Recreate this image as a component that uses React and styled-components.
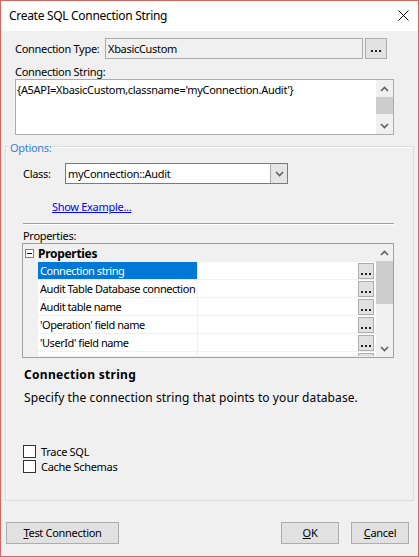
import styled, { createGlobalStyle } from "styled-components";

const GlobalStyle = createGlobalStyle`
  html, body { margin: 0; padding: 0; background: #f0f0f0; }
  body {
    font-family: "Segoe UI", "Noto Sans", sans-serif;
    font-size: 11px;
    letter-spacing: -0.3px;
    color: #000;
  }
  * { box-sizing: border-box; }
`;

const Window = styled.div`
  width: 419px;
  height: 557px;
  border: 1px solid #cf6763;
  display: flex;
  flex-direction: column;
  background: #f0f0f0;
  overflow: hidden;
`;

const TitleBar = styled.div`
  height: 30px;
  flex-shrink: 0;
  background: #fff;
  display: flex;
  align-items: center;
  justify-content: space-between;
  padding: 0 9px 1px 8px;
  font-size: 12px;
  line-height: 16px;
`;

const Body = styled.div`
  flex: 1;
  padding: 0 4px;
  display: flex;
  flex-direction: column;
`;

const Top = styled.div`
  padding: 7px 0 0 10px;
`;

const Row = styled.div`
  display: flex;
  align-items: flex-start;
  gap: ${(p) => p.gap || 0}px;
  margin-top: ${(p) => p.mt || 0}px;
`;

const Label = styled.div`
  width: ${(p) => p.w}px;
  padding-top: 3px;
  line-height: 15px;
  padding-left: ${(p) => p.pl || 0}px;
  white-space: nowrap;
`;

const Field = styled.div`
  width: ${(p) => p.w}px;
  height: 21px;
  border: 1px solid ${(p) => (p.white ? "#7a7a7a" : "#acacac")};
  background: ${(p) => (p.white ? "#fff" : "#f0f0f0")};
  padding: 2px 2px 0;
  line-height: 15px;
  display: flex;
  justify-content: space-between;
  align-items: flex-start;
`;

const SmallButton = styled.div`
  width: ${(p) => p.w}px;
  height: ${(p) => p.h}px;
  background: #e1e1e1;
  border: 1px solid #adadad;
  display: flex;
  align-items: center;
  justify-content: center;
  flex-shrink: 0;
`;

const Dots = styled.span`
  display: flex;
  gap: 2px;
  margin-top: ${(p) => p.mt || 4}px;
  span {
    width: 2px;
    height: 2px;
    background: #222;
  }
`;

const SectionLabel = styled.div`
  margin-top: 5px;
  line-height: 15px;
`;

const TextArea = styled.div`
  width: 379px;
  height: 56px;
  background: #fff;
  border: 1px solid #acacac;
  display: flex;
`;

const TextContent = styled.div`
  flex: 1;
  padding: 2px 1px;
  line-height: 15px;
`;

const ScrollBar = styled.div`
  width: 17px;
  background: #f0f0f0;
  display: flex;
  flex-direction: column;
  align-items: center;
`;

const ArrowBox = styled.div`
  height: 17px;
  width: 17px;
  display: flex;
  align-items: center;
  justify-content: center;
`;

const Thumb = styled.div`
  width: 17px;
  height: ${(p) => p.h}px;
  background: #cdcdcd;
`;

const Spacer = styled.div`
  flex: 1;
`;

const Group = styled.div`
  margin-top: 11px;
  height: 355px;
  flex-shrink: 0;
  border: 1px solid #dcdcdc;
  box-shadow: inset 1px 1px 0 #fff;
  padding: 0 19px 0 16px;
  display: flex;
  flex-direction: column;
`;

const Legend = styled.div`
  width: fit-content;
  margin: -7px 0 0 -13px;
  padding: 0 1px;
  background: #f0f0f0;
  color: #3a80dc;
  line-height: 15px;
`;

const ComboArrow = styled.div`
  width: 17px;
  height: 19px;
  margin: -2px -2px 0 0;
  background: #e5e5e5;
  border-left: 1px solid #acacac;
  display: flex;
  align-items: center;
  justify-content: center;
`;

const Link = styled.a`
  display: block;
  margin: 15px 0 0 30px;
  line-height: 15px;
  color: #0000ff;
  text-decoration: underline;
  width: fit-content;
`;

const Separator = styled.div`
  margin: 9px 0 0 1px;
  width: 371px;
  height: 2px;
  border-top: 1px solid #a0a0a0;
  border-bottom: 1px solid #fff;
`;

const PropsLabel = styled.div`
  margin: 3px 0 0 1px;
  line-height: 15px;
`;

const Grid = styled.div`
  width: 372px;
  height: 115px;
  flex-shrink: 0;
  border: 1px solid #a0a0a0;
  display: flex;
`;

const GridContent = styled.div`
  flex: 1;
  overflow: hidden;
  background: #fff;
`;

const HeaderRow = styled.div`
  height: 18px;
  background: #f0f0f0;
  display: flex;
  align-items: center;
  font-weight: bold;
  font-size: 12px;
`;

const Minus = styled.div`
  width: 9px;
  height: 9px;
  margin: 0 4px 0 2px;
  border: 1px solid #808080;
  background: #fff;
  display: flex;
  align-items: center;
  justify-content: center;
  &::after {
    content: "";
    width: 5px;
    height: 1px;
    background: #000;
  }
`;

const PropRow = styled.div`
  height: ${(p) => p.h || 18}px;
  flex-shrink: 0;
  display: flex;
  overflow: hidden;
  border-bottom: 1px solid #f0f0f0;
`;

const Gutter = styled.div`
  width: 15px;
  background: #f0f0f0;
`;

const NameCell = styled.div`
  width: 160px;
  padding: 1px 0 0 2px;
  line-height: 15px;
  letter-spacing: -0.45px;
  white-space: nowrap;
  overflow: hidden;
  background: ${(p) => (p.selected ? "#0078d7" : "#fff")};
  color: ${(p) => (p.selected ? "#fff" : "#000")};
  border-right: 1px solid #f0f0f0;
`;

const ValueCell = styled.div`
  flex: 1;
  display: flex;
  justify-content: flex-end;
  padding: 1px 2px 0 0;
`;

const DescTitle = styled.div`
  margin: 9px 0 0 2px;
  font-weight: bold;
  font-size: 12px;
  line-height: 15px;
  letter-spacing: 0.3px;
`;

const DescText = styled.div`
  margin: 8px 0 0 2px;
  font-size: 12px;
  line-height: 15px;
  letter-spacing: 0.08px;
  white-space: nowrap;
`;

const Checks = styled.div`
  margin: 40px 0 0 1px;
  display: flex;
  flex-direction: column;
  gap: 2px;
`;

const CheckRow = styled.label`
  display: flex;
  align-items: center;
  gap: 5px;
  height: 13px;
  line-height: 15px;
`;

const Box = styled.span`
  width: 13px;
  height: 13px;
  border: 1px solid #333;
  background: #fff;
`;

const Footer = styled.div`
  margin-top: 21px;
  display: flex;
  padding: 0 5px 0 1px;
  gap: 12px;
`;

const Button = styled.button`
  width: ${(p) => p.w}px;
  height: 22px;
  background: #e1e1e1;
  border: 1px solid #adadad;
  font: inherit;
  letter-spacing: inherit;
  color: #000;
  padding: 0 0 1px;
  u { text-decoration: underline; }
  &:first-child { margin-right: auto; }
`;

const Chevron = ({ up }) => (
  <svg width="9" height="6" viewBox="0 0 9 6">
    <path d={up ? "M1 5 L4.5 1.5 L8 5" : "M1 1 L4.5 4.5 L8 1"} fill="none" stroke="#606060" strokeWidth="1.6" />
  </svg>
);

const ThreeDots = ({ mt }) => (
  <Dots mt={mt}>
    <span />
    <span />
    <span />
  </Dots>
);

const props = [
  "Connection string",
  "Audit Table Database connection",
  "Audit table name",
  "'Operation' field name",
  "'UserId' field name",
  "Logged and field name",
];

export default function App() {
  return (
    <>
      <GlobalStyle />
      <Window>
        <TitleBar>
          <span>Create SQL Connection String</span>
          <svg width="11" height="11" viewBox="0 0 11 11">
            <path d="M0.5 0.5 L10.5 10.5 M10.5 0.5 L0.5 10.5" stroke="#000" strokeWidth="1" />
          </svg>
        </TitleBar>
        <Body>
          <Top>
            <Row gap={2}>
              <Label w={88}>Connection Type:</Label>
              <Field w={258}>XbasicCustom</Field>
              <SmallButton w={22} h={21}>
                <ThreeDots />
              </SmallButton>
            </Row>
            <SectionLabel>Connection String:</SectionLabel>
            <TextArea>
              <TextContent>{"{A5API=XbasicCustom,classname='myConnection.Audit'}"}</TextContent>
              <ScrollBar>
                <ArrowBox>
                  <Chevron up />
                </ArrowBox>
                <Thumb h={17} />
                <Spacer />
                <ArrowBox>
                  <Chevron />
                </ArrowBox>
              </ScrollBar>
            </TextArea>
          </Top>
          <Group>
            <Legend>Options:</Legend>
            <Row mt={8}>
              <Label w={43} pl={1}>Class:</Label>
              <Field w={223} white>
                <span>myConnection::Audit</span>
                <ComboArrow>
                  <Chevron />
                </ComboArrow>
              </Field>
            </Row>
            <Link href="#">Show Example...</Link>
            <Separator />
            <PropsLabel>Properties:</PropsLabel>
            <Grid>
              <GridContent>
                <HeaderRow>
                  <Minus />
                  Properties
                </HeaderRow>
                {props.map((p, i) => (
                  <PropRow key={p} h={i === 5 ? 5 : 18}>
                    <Gutter />
                    <NameCell selected={i === 0}>{p}</NameCell>
                    <ValueCell>
                      <SmallButton w={16} h={16}>
                        <ThreeDots mt={6} />
                      </SmallButton>
                    </ValueCell>
                  </PropRow>
                ))}
              </GridContent>
              <ScrollBar>
                <ArrowBox>
                  <Chevron up />
                </ArrowBox>
                <Thumb h={43} />
                <Spacer />
                <ArrowBox>
                  <Chevron />
                </ArrowBox>
              </ScrollBar>
            </Grid>
            <DescTitle>Connection string</DescTitle>
            <DescText>Specify the connection string that points to your database.</DescText>
            <Checks>
              <CheckRow>
                <Box />
                Trace SQL
              </CheckRow>
              <CheckRow>
                <Box />
                Cache Schemas
              </CheckRow>
            </Checks>
          </Group>
          <Footer>
            <Button w={113}>
              <u>T</u>est Connection
            </Button>
            <Button w={58}>
              <u>O</u>K
            </Button>
            <Button w={58}>
              <u>C</u>ancel
            </Button>
          </Footer>
        </Body>
      </Window>
    </>
  );
}
